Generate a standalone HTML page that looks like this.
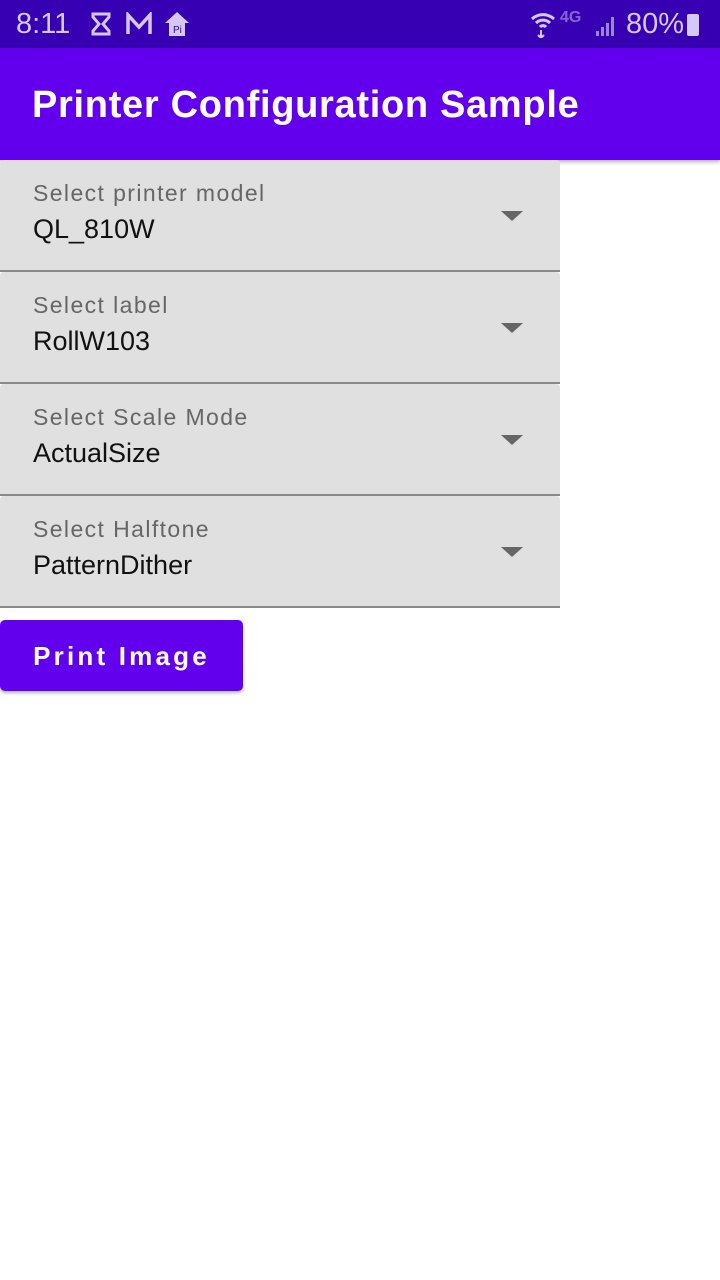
<!DOCTYPE html>
<html><head><style>
body{margin:0;width:720px;height:1280px;background:#fff;font-family:"Liberation Sans",sans-serif;position:relative;overflow:hidden}
.sb{position:absolute;top:0;left:0;width:720px;height:48px;background:#3700B3;color:#d6c8f5}
.ab{position:absolute;top:48px;left:0;width:720px;height:112px;background:#6200EE;box-shadow:0 2px 4px rgba(0,0,0,.3)}
.ab span{position:absolute;left:32px;top:76px;transform:translateY(-100%);color:#fff;font-size:38px;font-weight:bold;line-height:1;letter-spacing:0.7px}
.f{position:absolute;left:0;width:560px;height:110px;background:#e0e0e0;border-bottom:2px solid #8a8a8a;border-radius:4px 4px 0 0}
.f .l{position:absolute;left:33px;top:20px;font-size:23px;color:#666;letter-spacing:1.4px}
.f .v{position:absolute;left:33px;top:54px;font-size:27px;color:#111}
.f .a{position:absolute;left:501px;top:51px;width:0;height:0;border-left:11px solid transparent;border-right:11px solid transparent;border-top:10px solid #666}
.btn{position:absolute;left:0;top:620px;width:243px;height:71px;background:#6200EE;border-radius:5px;box-shadow:0 2px 3px rgba(0,0,0,.3);color:#fff;font-size:26px;font-weight:bold;letter-spacing:3.2px;text-align:center;line-height:73px}
</style></head><body>
<div class="sb">
<span style="position:absolute;left:16px;top:8px;font-size:29px">8:11</span>
<svg style="position:absolute;left:91px;top:12px" width="20" height="24"><path d="M2 2h16v3l-6 7 6 7v3H2v-3l6-7-6-7z" fill="none" stroke="#d6c8f5" stroke-width="3"/></svg>
<svg style="position:absolute;left:125px;top:12px" width="28" height="24"><path d="M3 22V3l11 12L25 3v19" fill="none" stroke="#d6c8f5" stroke-width="3.5"/></svg>
<svg style="position:absolute;left:163px;top:10px" width="28" height="28"><path d="M14 2L2 13h4v13h16V13h4z" fill="#d6c8f5"/><text x="10" y="23" font-size="10" fill="#3700B3" font-family="Liberation Sans">Pi</text></svg>
<svg style="position:absolute;left:530px;top:10px" width="26" height="28"><path d="M2 9a16 16 0 0 1 22 0M6 13a10 10 0 0 1 14 0M10 17a4 4 0 0 1 6 0" fill="none" stroke="#d6c8f5" stroke-width="3"/><path d="M11 20v8M8 25l3 3 3-3" fill="none" stroke="#d6c8f5" stroke-width="2"/></svg>
<span style="position:absolute;left:560px;top:9px;font-size:16px;opacity:.5;font-weight:bold">4G</span>
<svg style="position:absolute;left:594px;top:14px" width="24" height="22"><path d="M2 22h3v-5H2zM7 22h3v-9H7zM12 22h3v-13h-3zM17 22h3V3h-3z" fill="#9a86d8"/></svg>
<span style="position:absolute;left:626px;top:8px;font-size:29px">80%</span>
<div style="position:absolute;left:687px;top:14px;width:12px;height:22px;background:#d6c8f5;border-radius:2px"></div>
</div>
<div class="ab"><span>Printer Configuration Sample</span></div>
<div class="f" style="top:160px"><div class="l">Select printer model</div><div class="v">QL_810W</div><div class="a"></div></div>
<div class="f" style="top:272px"><div class="l">Select label</div><div class="v">RollW103</div><div class="a"></div></div>
<div class="f" style="top:384px"><div class="l">Select Scale Mode</div><div class="v">ActualSize</div><div class="a"></div></div>
<div class="f" style="top:496px"><div class="l">Select Halftone</div><div class="v">PatternDither</div><div class="a"></div></div>
<div class="btn">Print Image</div>
</body></html>
